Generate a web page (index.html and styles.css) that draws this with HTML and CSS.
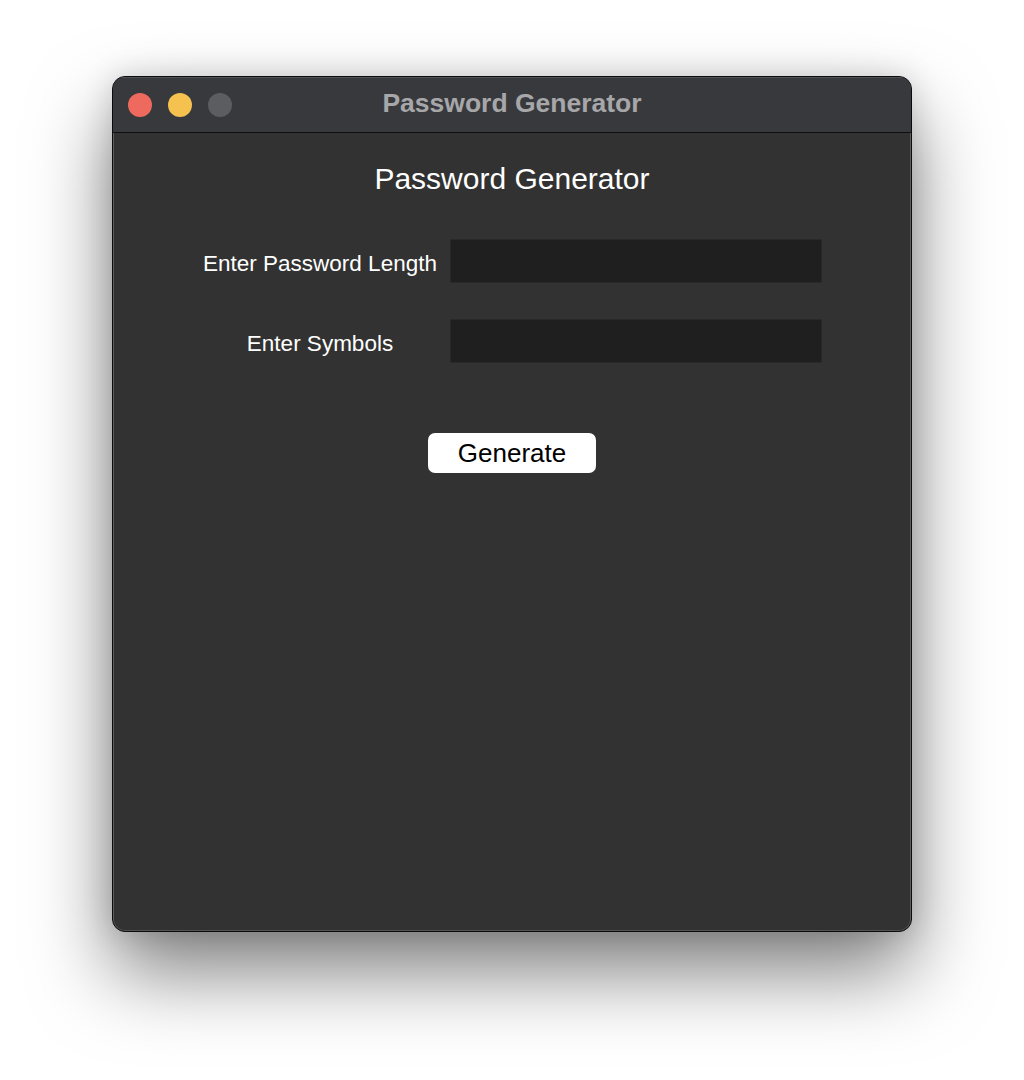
FILE: index.html
```html
<!DOCTYPE html>
<html>
<head>
<meta charset="utf-8">
<link rel="stylesheet" href="styles.css">
</head>
<body>
<div class="stage">
  <div class="window">
    <div class="titlebar">
      <div class="lights">
        <span class="light red"></span>
        <span class="light yellow"></span>
        <span class="light gray"></span>
      </div>
      <div class="wtitle">Password Generator</div>
    </div>
    <div class="content">
      <h1 class="heading">Password Generator</h1>
      <div class="form">
        <label class="label">Enter Password Length</label>
        <div class="entry"></div>
        <label class="label">Enter Symbols</label>
        <div class="entry"></div>
      </div>
      <div class="actions">
        <button class="btn">Generate</button>
      </div>
    </div>
  </div>
</div>
</body>
</html>
```

FILE: styles.css
```css
html, body {
  margin: 0;
  padding: 0;
  background: #ffffff;
  font-family: "Liberation Sans", Arial, sans-serif;
}
.stage {
  width: 1024px;
  height: 1080px;
  padding: 76px 0 0 112px;
  box-sizing: border-box;
}
.window {
  width: 800px;
  height: 856px;
  box-sizing: border-box;
  border: 1px solid #0c0c0c;
  border-radius: 13px;
  background: #323232;
  box-shadow: inset 0 0 0 1px rgba(255,255,255,0.16), 0 40px 80px rgba(0,0,0,0.5), 0 0 30px rgba(0,0,0,0.15);
  overflow: hidden;
  display: flex;
  flex-direction: column;
}
.titlebar {
  height: 56px;
  flex: none;
  box-sizing: border-box;
  background: #38393d;
  border-bottom: 1px solid #0e0e0e;
  box-shadow: inset 0 1px 0 rgba(255,255,255,0.12);
  display: flex;
  align-items: center;
  position: relative;
}
.lights {
  display: flex;
  gap: 16px;
  padding-left: 15px;
}
.light {
  width: 24px;
  height: 24px;
  border-radius: 50%;
  display: block;
}
.red { background: #ee695e; }
.yellow { background: #f5c14f; }
.gray { background: #5c5d61; }
.wtitle {
  position: absolute;
  left: 0;
  right: 0;
  top: 0;
  bottom: 0;
  display: flex;
  align-items: center;
  justify-content: center;
  color: #a7a7aa;
  font-weight: bold;
  font-size: 26.5px;
  padding-bottom: 3px;
}
.content {
  flex: 1;
  box-shadow: inset 1px 0 0 rgba(255,255,255,0.08), inset -1px 0 0 rgba(255,255,255,0.08);
}
.heading {
  margin: 0;
  padding-top: 28px;
  text-align: center;
  color: #ffffff;
  font-weight: normal;
  font-size: 30px;
  line-height: 36px;
}
.form {
  display: grid;
  grid-template-columns: 248px 372px;
  grid-auto-rows: 44px;
  column-gap: 6px;
  row-gap: 36px;
  margin: 42px 0 0 83px;
  align-items: center;
}
.label {
  color: #ffffff;
  font-size: 22.5px;
  text-align: center;
  line-height: 26px;
  padding-top: 5px;
}
.entry {
  height: 44px;
  box-sizing: border-box;
  background: #1f1f1f;
  border: 1px solid #292929;
}
.actions {
  display: flex;
  justify-content: center;
  margin-top: 70px;
}
.btn {
  width: 168px;
  height: 40px;
  border: none;
  border-radius: 7px;
  background: #ffffff;
  color: #000000;
  font-family: "Liberation Sans", Arial, sans-serif;
  font-size: 26px;
  padding: 0;
  line-height: 40px;
}
```
